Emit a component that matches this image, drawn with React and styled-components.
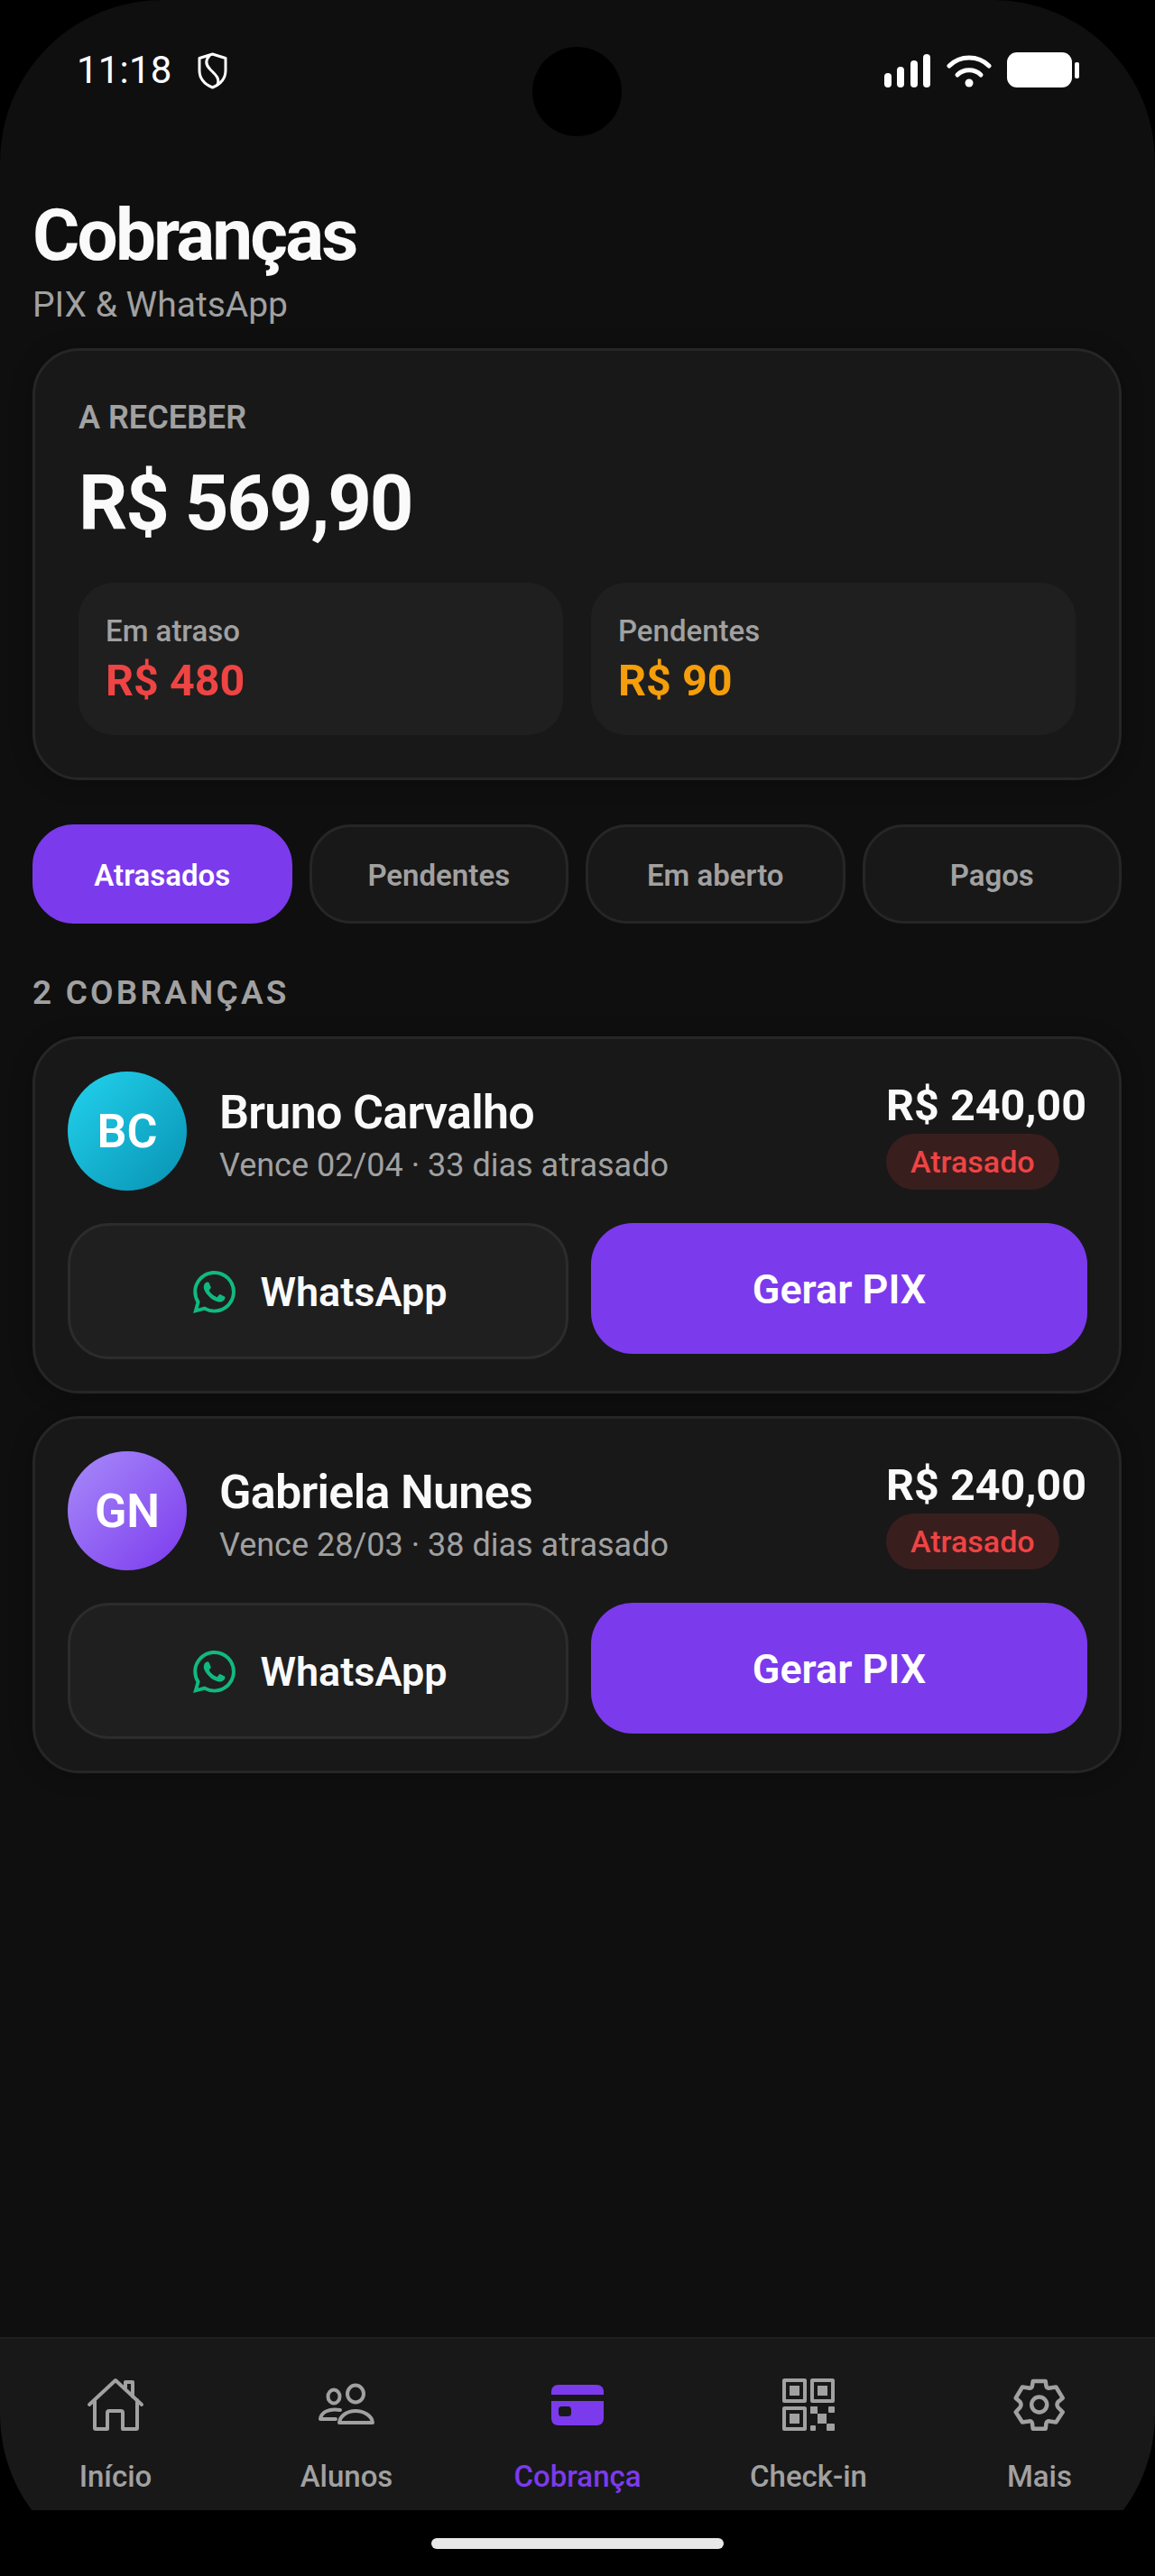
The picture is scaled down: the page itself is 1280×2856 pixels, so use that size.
import React from 'react';
import styled, { createGlobalStyle } from 'styled-components';
import { SiWhatsapp } from 'react-icons/si';

const GlobalStyle = createGlobalStyle`
  html, body {
    margin: 0;
    padding: 0;
    background: #000;
  }
  * {
    box-sizing: border-box;
  }
`;

const Phone = styled.div`
  position: relative;
  width: 1280px;
  height: 2856px;
  background: #000;
  border-radius: 180px;
  overflow: hidden;
  display: flex;
  flex-direction: column;
  font-family: Roboto, "Liberation Sans", sans-serif;
`;

const Screen = styled.div`
  flex: 1;
  display: flex;
  flex-direction: column;
  background: #0f0f0f;
`;

const StatusBar = styled.div`
  height: 214px;
  padding: 50px 84px 0 85px;
  display: flex;
  justify-content: space-between;
  align-items: flex-start;
  color: #fff;
`;

const Clock = styled.div`
  display: flex;
  align-items: center;
  gap: 28px;
  font-size: 42px;
  line-height: 56px;
  letter-spacing: 0.2px;
`;

const StatusIcons = styled.div`
  display: flex;
  align-items: center;
  gap: 17px;
  height: 56px;
`;

const Camera = styled.div`
  position: absolute;
  left: 590px;
  top: 52px;
  width: 99px;
  height: 99px;
  border-radius: 50%;
  background: #000;
`;

const Main = styled.main`
  flex: 1;
  padding: 0 37px 0 36px;
`;

const Title = styled.h1`
  margin: 0;
  font-size: 80px;
  line-height: 94px;
  font-weight: 700;
  letter-spacing: -2.8px;
  color: #fafafa;
`;

const Subtitle = styled.p`
  margin: 7px 0 25px;
  font-size: 39px;
  line-height: 46px;
  color: #a1a1a1;
`;

const Card = styled.section`
  background: #181818;
  border: 3px solid #262626;
  border-radius: 52px;
  box-shadow: 0 2px 24px rgba(0, 0, 0, 0.25);
`;

const SummaryCard = styled(Card)`
  padding: 53px 48px 47px;
  margin-bottom: 49px;
`;

const SummaryLabel = styled.div`
  font-size: 36px;
  line-height: 42px;
  font-weight: 600;
  color: #a1a1a1;
`;

const SummaryTotal = styled.div`
  font-size: 85px;
  line-height: 100px;
  font-weight: 700;
  letter-spacing: -2.2px;
  color: #fafafa;
  margin: 24px 0 38px;
`;

const SummaryGrid = styled.div`
  display: grid;
  grid-template-columns: 1fr 1fr;
  gap: 31px;
`;

const SummaryBox = styled.div`
  height: 169px;
  padding: 34px 30px 0;
  background: #1f1f1f;
  border-radius: 39px;
`;

const BoxLabel = styled.div`
  font-size: 33px;
  line-height: 39px;
  font-weight: 500;
  color: #a1a1a1;
`;

const BoxValue = styled.div`
  margin-top: 8px;
  font-size: 48.5px;
  line-height: 56px;
  font-weight: 700;
  color: ${props => props.$color};
`;

const Tabs = styled.div`
  display: grid;
  grid-template-columns: repeat(4, 1fr);
  gap: 19px;
  margin-bottom: 56px;
`;

const Tab = styled.div`
  height: 110px;
  padding-top: 2px;
  display: flex;
  align-items: center;
  justify-content: center;
  border-radius: 46px;
  font-size: 33px;
  font-weight: 600;
  color: ${props => (props.$active ? '#fff' : '#a1a1a1')};
  background: ${props => (props.$active ? '#7c3aed' : '#181818')};
  border: 3px solid ${props => (props.$active ? '#7c3aed' : '#262626')};
`;

const SectionLabel = styled.div`
  font-size: 37px;
  line-height: 42px;
  font-weight: 600;
  letter-spacing: 3.2px;
  color: #a1a1a1;
  margin-bottom: 27px;
`;

const ChargeList = styled.div`
  display: flex;
  flex-direction: column;
  gap: 25px;
`;

const ChargeCard = styled(Card)`
  height: 396px;
  padding: 36px;
`;

const ChargeTop = styled.div`
  display: flex;
  align-items: center;
  gap: 36px;
  height: 132px;
  margin-bottom: 36px;
`;

const Avatar = styled.div`
  flex: none;
  width: 132px;
  height: 132px;
  border-radius: 50%;
  display: flex;
  align-items: center;
  justify-content: center;
  font-size: 52px;
  font-weight: 600;
  color: #fff;
  background: linear-gradient(135deg, ${props => props.$from}, ${props => props.$to});
`;

const ChargeInfo = styled.div`
  flex: 1;
  padding-top: 9px;
`;

const Name = styled.div`
  font-size: 52px;
  line-height: 61px;
  font-weight: 600;
  letter-spacing: -0.7px;
  color: #fafafa;
`;

const Due = styled.div`
  font-size: 36px;
  line-height: 44px;
  margin-top: 6px;
  color: #a1a1a1;
`;

const ChargeRight = styled.div`
  display: flex;
  flex-direction: column;
  align-items: flex-start;
  padding-top: 8px;
`;

const Amount = styled.div`
  font-size: 48.5px;
  line-height: 58px;
  font-weight: 700;
  margin-bottom: 2px;
  color: #fafafa;
`;

const Badge = styled.div`
  height: 62px;
  padding: 0 27px;
  display: flex;
  align-items: center;
  border-radius: 31px;
  background: #391e1e;
  color: #ef4444;
  font-size: 34px;
  font-weight: 500;
`;

const Actions = styled.div`
  display: grid;
  grid-template-columns: 555px 550px;
  gap: 25px;
  align-items: start;
`;

const WhatsAppButton = styled.div`
  height: 151px;
  padding: 2px 0 0 5px;
  display: flex;
  align-items: center;
  justify-content: center;
  gap: 27px;
  background: #1f1f1f;
  border: 3px solid #2c2c2c;
  border-radius: 46px;
  color: #fafafa;
  font-size: 45px;
  font-weight: 600;
`;

const PixButton = styled.div`
  height: 145px;
  padding-top: 2px;
  display: flex;
  align-items: center;
  justify-content: center;
  background: #7c3aed;
  border-radius: 46px;
  color: #fff;
  font-size: 45px;
  font-weight: 600;
`;

const Nav = styled.nav`
  height: 192px;
  display: grid;
  grid-template-columns: repeat(5, 1fr);
  background: #181818;
  border-top: 2px solid #1f1f1f;
`;

const NavItem = styled.div`
  display: flex;
  flex-direction: column;
  align-items: center;
  padding-top: 43px;
  color: ${props => (props.$active ? '#7c3aed' : '#a1a1a1')};
`;

const NavIconSlot = styled.div`
  height: 60px;
  display: flex;
  align-items: center;
  justify-content: center;
`;

const NavLabel = styled.span`
  margin-top: 30px;
  font-size: 33px;
  line-height: 39px;
  font-weight: 500;
`;

const HomeArea = styled.div`
  height: 73px;
  flex: none;
  display: flex;
  justify-content: center;
  padding-top: 31px;
`;

const HomeBar = styled.div`
  width: 324px;
  height: 12px;
  border-radius: 6px;
  background: #e8e8e8;
`;

const ShieldIcon = () => (
  <svg width="33" height="41" viewBox="0 0 33 41" fill="none" stroke="#fff" strokeWidth="3" strokeLinejoin="round" strokeLinecap="round">
    <path d="M16.5 2 L31 6.5 V20 C31 29 25 35.5 16.5 39 C8 35.5 2 29 2 20 V6.5 Z" />
    <path d="M13 4 C8 9 9 14 14 19 C20 25 25 29 22 36" />
  </svg>
);

const SignalIcon = () => (
  <svg width="52" height="37" viewBox="0 0 52 37" fill="#fff">
    <rect x="0" y="21" width="8" height="16" rx="4" />
    <rect x="14" y="14" width="8" height="23" rx="4" />
    <rect x="29" y="7" width="8" height="30" rx="4" />
    <rect x="43" y="0" width="8" height="37" rx="4" />
  </svg>
);

const WifiIcon = () => (
  <svg width="50" height="37" viewBox="0 0 50 37" fill="none" stroke="#fff" strokeWidth="5" strokeLinecap="round">
    <path d="M3 13 C15 1 35 1 47 13" />
    <path d="M12 23 C19 16 31 16 38 23" />
    <circle cx="25" cy="32" r="4.5" fill="#fff" stroke="none" />
  </svg>
);

const BatteryIcon = () => (
  <svg width="80" height="40" viewBox="0 0 80 40" fill="#fff">
    <rect x="0" y="0" width="72" height="39" rx="11" />
    <rect x="75" y="11" width="5" height="18" rx="2" />
  </svg>
);

const HomeIcon = () => (
  <svg width="64" height="60" viewBox="0 0 64 60" fill="none" stroke="currentColor" strokeWidth="4" strokeLinejoin="round" strokeLinecap="round">
    <path d="M3 30 L32 3 L61 30" />
    <path d="M43 11 V5 H51 V21" />
    <path d="M9 25 V56 Q9 57 10 57 H23 V39 Q23 37 25 37 H38 Q40 37 40 39 V57 H55 Q56 57 56 56 V25" />
  </svg>
);

const PeopleIcon = () => (
  <svg width="64" height="50" viewBox="0 0 64 50" fill="none" stroke="currentColor" strokeWidth="4" strokeLinejoin="round" strokeLinecap="round">
    <ellipse cx="18" cy="16" rx="6.5" ry="7.5" />
    <ellipse cx="42" cy="13" rx="9" ry="9.5" />
    <path d="M25 31 C13 29 4 33 3 41 H20" />
    <path d="M24 45 C25 37 33 32 42 32 C51 32 60 37 61 45 Z" />
  </svg>
);

const CardIcon = () => (
  <svg width="58" height="45" viewBox="0 0 58 45" fill="currentColor">
    <path d="M0 11 V8 C0 3 3 0 8 0 H50 C55 0 58 3 58 8 V11 Z" />
    <path fillRule="evenodd" d="M0 18 H58 V37 C58 42 55 45 50 45 H8 C3 45 0 42 0 37 Z M12 24 C9 24 8 25 8 28 V31 C8 34 9 35 12 35 H18 C21 35 22 34 22 31 V28 C22 25 21 24 18 24 Z" />
  </svg>
);

const QrIcon = () => (
  <svg width="58" height="58" viewBox="0 0 58 58" fill="currentColor">
    <path fillRule="evenodd" d="M2 0 H25 C26 0 27 1 27 2 V25 C27 26 26 27 25 27 H2 C1 27 0 26 0 25 V2 C0 1 1 0 2 0 Z M4 4 V23 H23 V4 Z" />
    <rect x="8" y="8" width="11" height="11" />
    <path fillRule="evenodd" d="M33 0 H56 C57 0 58 1 58 2 V25 C58 26 57 27 56 27 H33 C32 27 31 26 31 25 V2 C31 1 32 0 33 0 Z M35 4 V23 H54 V4 Z" />
    <rect x="39" y="8" width="11" height="11" />
    <path fillRule="evenodd" d="M2 31 H25 C26 31 27 32 27 33 V56 C27 57 26 58 25 58 H2 C1 58 0 57 0 56 V33 C0 32 1 31 2 31 Z M4 35 V54 H23 V35 Z" />
    <rect x="8" y="39" width="11" height="11" />
    <rect x="31" y="31" width="8" height="8" />
    <rect x="39" y="39" width="10" height="11" />
    <rect x="51" y="31" width="7" height="7" rx="1" />
    <rect x="31" y="52" width="6" height="6" rx="1" />
    <rect x="49" y="50" width="9" height="8" rx="1" />
  </svg>
);

const GearIcon = () => (
  <svg width="58" height="58" viewBox="0 0 58 58" fill="none" stroke="currentColor" strokeWidth="4.5" strokeLinejoin="round" strokeLinecap="round">
    <path d="M21.7 3 H35.7 L36.4 8 Q37 11.5 40.5 10.5 L47.3 9.5 L54.7 21.7 L49.5 26 Q47.5 29 49.5 32 L54.7 37.3 L47.3 48.5 L40.5 47.5 Q37 46.5 36.4 50 L35.7 55.7 H21.7 L21 50 Q20.4 46.5 17 47.5 L10 48.5 L2.7 37.3 L7.5 32 Q9.5 29 7.5 26 L2.7 21.7 L10 9.5 L17 10.5 Q20.4 11.5 21 8 Z" />
    <circle cx="28.7" cy="29" r="8.5" />
  </svg>
);

const charges = [
  { initials: 'BC', name: 'Bruno Carvalho', due: 'Vence 02/04 · 33 dias atrasado', from: '#22d3ee', to: '#0891b2' },
  { initials: 'GN', name: 'Gabriela Nunes', due: 'Vence 28/03 · 38 dias atrasado', from: '#a78bfa', to: '#7c3aed' },
];

const navItems = [
  { label: 'Início', icon: <HomeIcon /> },
  { label: 'Alunos', icon: <PeopleIcon /> },
  { label: 'Cobrança', icon: <CardIcon />, active: true },
  { label: 'Check-in', icon: <QrIcon /> },
  { label: 'Mais', icon: <GearIcon /> },
];

const App = () => {
  return (
    <>
      <GlobalStyle />
      <Phone>
        <Screen>
          <StatusBar>
            <Clock>
              11:18
              <ShieldIcon />
            </Clock>
            <StatusIcons>
              <SignalIcon />
              <WifiIcon />
              <BatteryIcon />
            </StatusIcons>
          </StatusBar>
          <Main>
            <Title>Cobranças</Title>
            <Subtitle>PIX &amp; WhatsApp</Subtitle>
            <SummaryCard>
              <SummaryLabel>A RECEBER</SummaryLabel>
              <SummaryTotal>R$ 569,90</SummaryTotal>
              <SummaryGrid>
                <SummaryBox>
                  <BoxLabel>Em atraso</BoxLabel>
                  <BoxValue $color="#ef4444">R$ 480</BoxValue>
                </SummaryBox>
                <SummaryBox>
                  <BoxLabel>Pendentes</BoxLabel>
                  <BoxValue $color="#f59e0b">R$ 90</BoxValue>
                </SummaryBox>
              </SummaryGrid>
            </SummaryCard>
            <Tabs>
              <Tab $active>Atrasados</Tab>
              <Tab>Pendentes</Tab>
              <Tab>Em aberto</Tab>
              <Tab>Pagos</Tab>
            </Tabs>
            <SectionLabel>2 COBRANÇAS</SectionLabel>
            <ChargeList>
              {charges.map(charge => (
                <ChargeCard key={charge.initials}>
                  <ChargeTop>
                    <Avatar $from={charge.from} $to={charge.to}>{charge.initials}</Avatar>
                    <ChargeInfo>
                      <Name>{charge.name}</Name>
                      <Due>{charge.due}</Due>
                    </ChargeInfo>
                    <ChargeRight>
                      <Amount>R$ 240,00</Amount>
                      <Badge>Atrasado</Badge>
                    </ChargeRight>
                  </ChargeTop>
                  <Actions>
                    <WhatsAppButton>
                      <SiWhatsapp size={47} color="#10b981" />
                      WhatsApp
                    </WhatsAppButton>
                    <PixButton>Gerar PIX</PixButton>
                  </Actions>
                </ChargeCard>
              ))}
            </ChargeList>
          </Main>
          <Nav>
            {navItems.map(item => (
              <NavItem key={item.label} $active={item.active}>
                <NavIconSlot>{item.icon}</NavIconSlot>
                <NavLabel>{item.label}</NavLabel>
              </NavItem>
            ))}
          </Nav>
        </Screen>
        <HomeArea>
          <HomeBar />
        </HomeArea>
        <Camera />
      </Phone>
    </>
  );
};

export default App;
